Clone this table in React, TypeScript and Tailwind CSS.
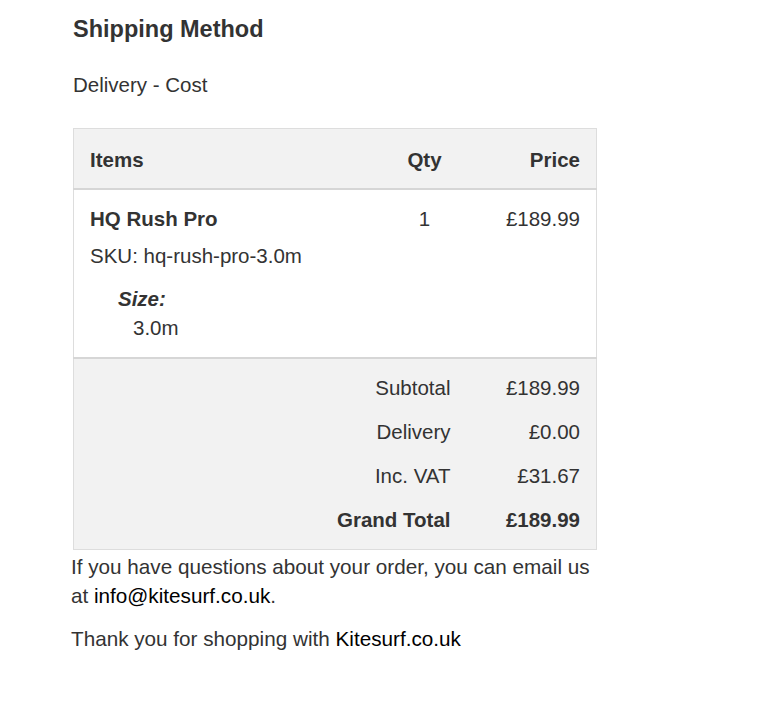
export default function App() {
  const totals = [
    { label: 'Subtotal', value: '£189.99' },
    { label: 'Delivery', value: '£0.00' },
    { label: 'Inc. VAT', value: '£31.67' },
  ];

  return (
    <div className="min-h-[726px] bg-white text-[#333] font-['Liberation_Sans',Arial,sans-serif]">
      <div className="pl-[73px] pt-[15px]">
        <h2 className="text-[23.5px] font-bold leading-[28px]">Shipping Method</h2>
        <p className="mt-[30px] text-[20.5px] leading-[24px]">Delivery - Cost</p>

        <table className="mt-[31px] w-[524px] border-collapse border border-[#ddd] text-[20.5px]">
          <thead>
            <tr className="bg-[#f2f2f2]">
              <th className="h-[60px] px-4 pt-[4px] text-left font-bold">Items</th>
              <th className="w-[84px] px-4 pt-[4px] text-center font-bold">Qty</th>
              <th className="w-[130px] px-4 pt-[4px] text-right font-bold">Price</th>
            </tr>
          </thead>
          <tbody className="border-t-2 border-[#d6d6d6]">
            <tr className="align-top">
              <td className="px-4 pt-[17px] pb-[17px]">
                <p className="font-bold leading-[24px]">HQ Rush Pro</p>
                <p className="mt-[13px] leading-[24px]">SKU: hq-rush-pro-3.0m</p>
                <dl className="mt-[19px] pl-[28px]">
                  <dt className="font-bold italic leading-[24px]">Size:</dt>
                  <dd className="mt-[5px] pl-[15px] leading-[24px]">3.0m</dd>
                </dl>
              </td>
              <td className="px-4 pt-[17px] text-center leading-[24px]">1</td>
              <td className="px-4 pt-[17px] text-right leading-[24px]">£189.99</td>
            </tr>
          </tbody>
          <tfoot className="border-t-2 border-[#d6d6d6] bg-[#f2f2f2]">
            {totals.map((t, i) => (
              <tr key={t.label}>
                <td colSpan={2} className={`px-4 text-right leading-[24px] ${i === 0 ? 'pt-[17px]' : 'pt-[20px]'}`}>
                  {t.label}
                </td>
                <td className={`px-4 text-right leading-[24px] ${i === 0 ? 'pt-[17px]' : 'pt-[20px]'}`}>
                  {t.value}
                </td>
              </tr>
            ))}
            <tr className="font-bold">
              <td colSpan={2} className="px-4 pt-[20px] pb-[17px] text-right leading-[24px]">
                Grand Total
              </td>
              <td className="px-4 pt-[20px] pb-[17px] text-right leading-[24px]">£189.99</td>
            </tr>
          </tfoot>
        </table>
      </div>

      <div className="pl-[71px] text-[20.7px]">
        <p className="mt-[2px] leading-[29px]">
          If you have questions about your order, you can email us
          <br />
          at <a className="text-black">info@kitesurf.co.uk</a>.
        </p>
        <p className="mt-[14px] leading-[29px]">
          Thank you for shopping with <a className="text-black">Kitesurf.co.uk</a>
        </p>
      </div>
    </div>
  );
}
